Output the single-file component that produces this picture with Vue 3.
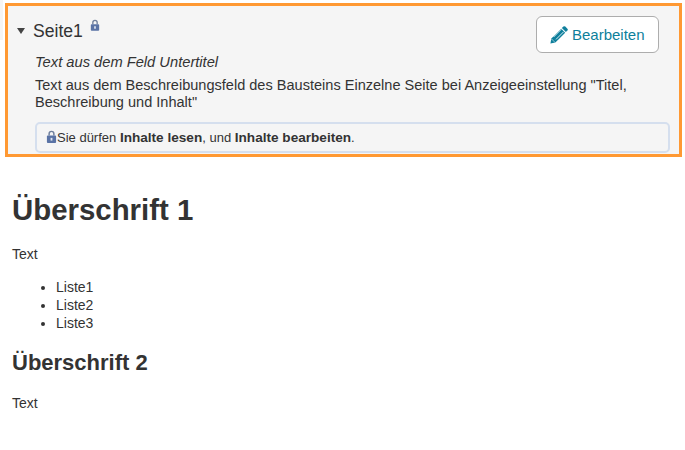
<script setup>
const items = ['Liste1', 'Liste2', 'Liste3']
</script>

<template>
  <div class="page">
    <div class="edge"></div>
    <section class="panel">
      <div class="head">
        <div class="title-row">
          <span class="caret"></span>
          <h3 class="title">Seite1</h3>
          <svg class="lock lock-top" viewBox="0 0 12 14" aria-hidden="true">
            <path d="M2.6 6V4a3.4 3.4 0 0 1 6.8 0v2H7.8V4a1.8 1.8 0 0 0-3.6 0v2z" fill="#6f7f9c" />
            <rect x="1" y="6" width="10" height="8" rx="1" fill="#5a73a5" />
            <rect x="5" y="8.5" width="2" height="3" fill="#dfe5f0" />
          </svg>
        </div>
        <button class="edit">
          <svg class="pencil" viewBox="0 0 18 18" aria-hidden="true">
            <path d="M13.4.6a1.4 1.4 0 0 1 1.9 0l2.1 2.1a1.4 1.4 0 0 1 0 1.9l-1.5 1.5-4-4z" fill="#0f7f9c" />
            <path d="M11.2 2.8l4 4-9.8 9.8-5 1 1-5z" fill="#0f7f9c" />
            <path d="M3.6 11l7.6-7.6M6 13.4l7.6-7.6" stroke="#eaf5f8" stroke-width=".9" />
            <path d="M1.4 12.8l3.8 3.8" stroke="#eaf5f8" stroke-width=".6" />
          </svg>
          Bearbeiten
        </button>
      </div>
      <div class="body">
        <p class="subtitle">Text aus dem Feld Untertitel</p>
        <p class="desc">Text aus dem Beschreibungsfeld des Bausteins Einzelne Seite bei Anzeigeeinstellung "Titel, Beschreibung und Inhalt"</p>
        <div class="rights">
          <svg class="lock lock-small" viewBox="0 0 12 14" aria-hidden="true">
            <path d="M2.6 6V4a3.4 3.4 0 0 1 6.8 0v2H7.8V4a1.8 1.8 0 0 0-3.6 0v2z" fill="#6f7f9c" />
            <rect x="1" y="6" width="10" height="8" rx="1" fill="#5a73a5" />
            <rect x="5" y="8.5" width="2" height="3" fill="#dfe5f0" />
          </svg>
          <span>Sie dürfen <b>Inhalte lesen</b>, und <b>Inhalte bearbeiten</b>.</span>
        </div>
      </div>
    </section>

    <main class="content">
      <h1>Überschrift 1</h1>
      <p>Text</p>
      <ul>
        <li v-for="item in items" :key="item">{{ item }}</li>
      </ul>
      <h2>Überschrift 2</h2>
      <p>Text</p>
    </main>
  </div>
</template>

<style scoped>
.page {
  position: relative;
  width: 685px;
  height: 450px;
  overflow: hidden;
  background: #fff;
  color: #333;
  font-family: "Liberation Sans", Arial, sans-serif;
  font-size: 14px;
  line-height: 18px;
}

.edge {
  position: absolute;
  left: 0;
  top: 0;
  width: 3px;
  height: 40px;
  background: #f5f5f5;
}

.panel {
  margin: 3px 3px 0 5px;
  height: 154px;
  box-sizing: border-box;
  border: 3px solid #ff9933;
  background: #f5f5f5;
  padding: 10px 10px 0 8px;
}

.head {
  display: flex;
  justify-content: space-between;
  align-items: flex-start;
}

.title-row {
  display: flex;
  align-items: flex-start;
  padding-top: 5px;
}

.caret {
  width: 0;
  height: 0;
  margin: 7px 8px 0 1px;
  border-left: 4px solid transparent;
  border-right: 4px solid transparent;
  border-top: 6px solid #444;
}

.title {
  margin: 0;
  font-size: 17.6px;
  font-weight: 400;
  line-height: 20px;
}

.lock {
  width: 10px;
  height: 12px;
  flex: none;
}

.lock-top {
  margin: -2px 0 0 7px;
}

.lock-small {
  width: 11px;
  height: 13px;
  margin-top: -2px;
}

.edit {
  display: flex;
  align-items: center;
  gap: 4px;
  width: 123px;
  height: 37px;
  margin-right: 10px;
  padding: 0 0 0 13px;
  box-sizing: border-box;
  background: #fff;
  border: 1px solid #adadad;
  border-radius: 6px;
  color: #0e7f9b;
  font: inherit;
  font-size: 15px;
}

.pencil {
  width: 18px;
  height: 18px;
}

.body {
  margin: 0 0 0 19px;
}

.subtitle {
  margin: 0 0 6px;
  font-size: 14.7px;
  font-style: italic;
}

.desc {
  margin: 0 0 11px;
  font-size: 14.56px;
  line-height: 17px;
}

.rights {
  display: flex;
  align-items: center;
  width: 635px;
  height: 31px;
  box-sizing: border-box;
  padding-left: 9px;
  border: 2px solid #d5dfee;
  border-radius: 5px;
  font-size: 13px;
}

.rights b {
  font-size: 13.6px;
}

.content {
  padding: 0 12px;
}

h1 {
  margin: 36px 0 0;
  font-size: 29.4px;
  line-height: 33px;
}

h2 {
  margin: 19px 0 0;
  font-size: 22px;
  line-height: 24px;
}

p {
  margin: 0;
}

.content p {
  margin-top: 19px;
}

ul {
  margin: 15px 0 0;
  padding-left: 44px;
}
</style>
